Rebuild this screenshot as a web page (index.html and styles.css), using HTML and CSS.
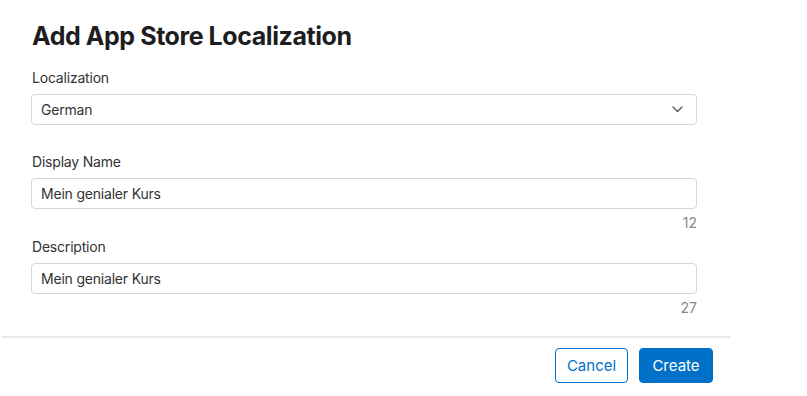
FILE: index.html
```html
<!DOCTYPE html>
<html lang="en">
<head>
<meta charset="utf-8">
<title>Add App Store Localization</title>
<link rel="stylesheet" href="styles.css">
</head>
<body>
<div class="modal">
  <div class="content">
    <h1 class="title">Add App Store Localization</h1>
    <div class="field field-first">
      <label class="label">Localization</label>
      <div class="select">
        <span>German</span>
        <svg class="chevron" width="11" height="7" viewBox="0 0 11 7"><path d="M1 1l4.5 4.5L10 1" fill="none" stroke="#555" stroke-width="1.3" stroke-linecap="round" stroke-linejoin="round"/></svg>
      </div>
    </div>
    <div class="field field-second">
      <label class="label">Display Name</label>
      <div class="input">Mein genialer Kurs</div>
      <div class="counter">12</div>
    </div>
    <div class="field field-third">
      <label class="label">Description</label>
      <div class="input">Mein genialer Kurs</div>
      <div class="counter">27</div>
    </div>
  </div>
  <div class="footer">
    <button class="btn btn-secondary">Cancel</button>
    <button class="btn btn-primary">Create</button>
  </div>
</div>
</body>
</html>
```
FILE: styles.css
```css
html, body {
  margin: 0;
  padding: 0;
  background: #fff;
}
body {
  font-family: Inter, "Noto Sans", sans-serif;
  color: #333;
}
.modal {
  margin-left: 2px;
  width: 729px;
}
.content {
  padding: 20px 34px 0 29px;
}
.title {
  margin: 0 0 0 1px;
  font-size: 25px;
  line-height: 32px;
  font-weight: 700;
  color: #1d1d1f;
  letter-spacing: -0.43px;
}
.field {
  display: flex;
  flex-direction: column;
}
.label {
  margin: 0 0 8px 1px;
  font-size: 14px;
  line-height: 17px;
  color: #333;
  letter-spacing: -0.2px;
}
.field-first .label {
  margin-top: 17px;
}
.field-second .label {
  margin-top: 28px;
}
.field-third .label {
  margin-top: 7px;
}
.select, .input {
  box-sizing: border-box;
  height: 31px;
  border: 1px solid #d6d6d6;
  border-radius: 4px;
  padding: 0 10px 0 9px;
  display: flex;
  align-items: center;
  font-size: 14px;
  color: #333;
  letter-spacing: -0.2px;
}
.select {
  justify-content: space-between;
}
.chevron {
  margin-right: 3px;
}
.counter {
  text-align: right;
  font-size: 14px;
  line-height: 17px;
  margin-top: 5px;
  color: #8a8a8a;
}
.footer {
  margin-top: 20px;
  border-top: 2px solid #e8e8e8;
  padding: 10px 18px 0 0;
  display: flex;
  justify-content: flex-end;
  gap: 11px;
}
.btn {
  box-sizing: border-box;
  height: 35px;
  border-radius: 4px;
  font-family: Inter, "Noto Sans", sans-serif;
  font-size: 15px;
  padding: 0;
  cursor: pointer;
}
.btn-secondary {
  width: 73px;
  background: #fff;
  color: #0070c9;
  border: 1px solid #0070c9;
}
.btn-primary {
  width: 74px;
  background: #0070c9;
  color: #fff;
  border: 1px solid #0070c9;
}
```
